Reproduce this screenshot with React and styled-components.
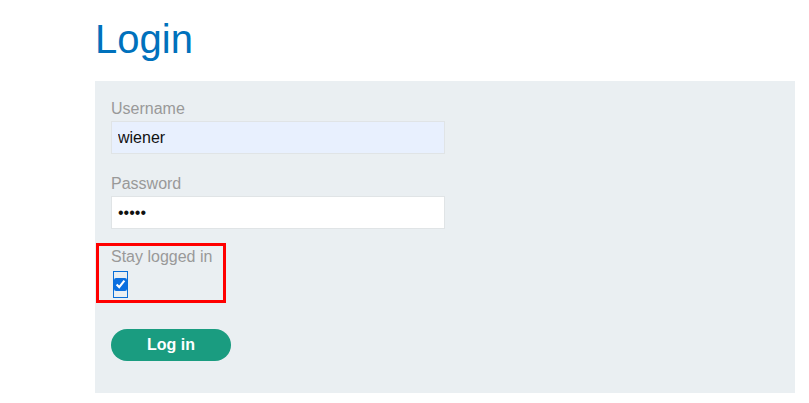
import styled, { createGlobalStyle } from "styled-components";

const Global = createGlobalStyle`
    body {
        margin: 0;
        background: #ffffff;
        font-family: "Liberation Sans", Arial, sans-serif;
    }
`;

const Page = styled.div`
    padding-left: 95px;
    width: 700px;
`;

const Title = styled.h1`
    color: #0071bc;
    font-size: 40px;
    font-weight: 400;
    margin: 0;
    padding-top: 15px;
    height: 66px;
    line-height: 48px;
`;

const Panel = styled.form`
    background: #eaeff2;
    padding: 18px 16px 32px;
    display: flex;
    flex-direction: column;
    align-items: flex-start;
`;

const Label = styled.label`
    color: #999999;
    font-size: 16px;
    line-height: 19px;
    margin-bottom: 3px;
    white-space: nowrap;
`;

const Input = styled.input`
    box-sizing: border-box;
    width: 334px;
    height: 33px;
    border: 1px solid #e0e4e6;
    background: ${(p) => (p.$filled ? "#e8f0fe" : "#ffffff")};
    font-family: "Liberation Sans", Arial, sans-serif;
    font-size: 16px;
    padding: 0 6px;
    margin: 0 0 ${(p) => p.$gap || 20}px;
    color: #111;
    outline: none;
`;

const Highlight = styled.div`
    margin-left: -15px;
    border: 3px solid #ff0000;
    padding: 1px 12px 3px 12px;
    width: 130px;
    box-sizing: border-box;
    display: flex;
    flex-direction: column;
    align-items: flex-start;
`;

const Check = styled.input`
    margin: 3px 0 0 3px;
    width: 13px;
    height: 25px;
    outline: 1px solid #0a6fd8;
    outline-offset: 0;
    accent-color: #0b6fe0;
`;

const Button = styled.button`
    margin-top: 26px;
    width: 120px;
    height: 32px;
    border: none;
    border-radius: 16px;
    background: #1a9c80;
    color: #ffffff;
    font-family: "Liberation Sans", Arial, sans-serif;
    font-weight: 700;
    font-size: 16px;
`;

export default function App() {
    return (
        <Page>
            <Global />
            <Title>Login</Title>
            <Panel onSubmit={(e) => e.preventDefault()}>
                <Label>Username</Label>
                <Input $filled defaultValue="wiener" />
                <Label>Password</Label>
                <Input type="password" defaultValue="peter" $gap={14} />
                <Highlight>
                    <Label>Stay logged in</Label>
                    <Check type="checkbox" defaultChecked />
                </Highlight>
                <Button type="submit">Log in</Button>
            </Panel>
        </Page>
    );
}
